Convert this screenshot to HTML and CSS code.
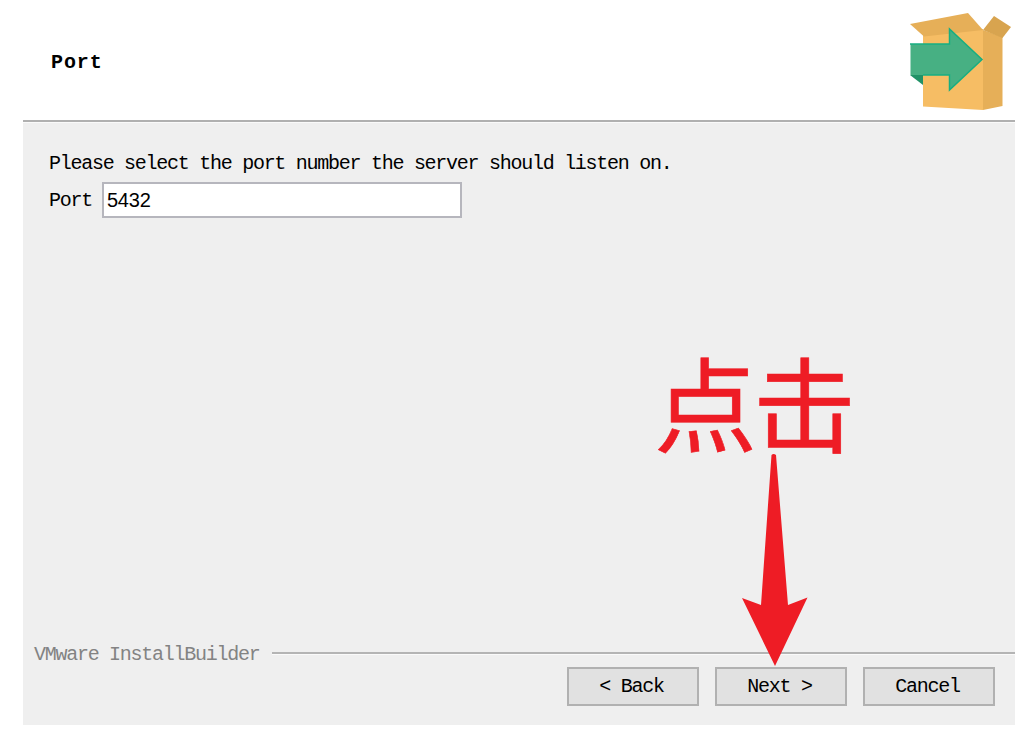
FILE: index.html
```html
<!DOCTYPE html>
<html lang="en">
<head>
  <meta charset="UTF-8">
  <meta name="viewport" content="width=device-width, initial-scale=1.0">
  <title>Port</title>
  <link rel="stylesheet" href="styles.css">
</head>
<body>
  <div class="installer">
    <header class="header">
      <h1>Port</h1>
      <svg class="logo" viewBox="0 0 102 98" width="102" height="98">
        <path d="M13 22 73 16 73 97 13 93.500z" fill="#f6bd64"/>
        <path d="M73 17 92.500 24 92.500 93 73 97z" fill="#e6af58"/>
        <path d="M0 11 58 0 73 17 14 23.500z" fill="#e6af58"/>
        <path d="M73 17 84 3 101 14 92.500 25z" fill="#d8a44f"/>
        <path d="M0 62 13 62 13 72z" fill="#219267"/>
        <path d="M.500 31 39.500 31 39.500 16 72 46.500 39.500 77 39.500 62 .500 62z" fill="#47b083"/>
        <path d="M0 31H39.500V16L72 46.500 39.500 77V62H13" fill="none" stroke="#17ae82" stroke-width="1.500"/>
      </svg>
    </header>
    <form class="content">
      <p>Please select the port number the server should listen on.</p>
      <div class="field">
        <label for="port">Port</label>
        <input type="text" id="port" value="5432">
      </div>
    </form>
    <footer class="footer">
      <div class="brand">
        <span>VMware InstallBuilder</span>
        <div class="line"></div>
      </div>
      <div class="buttons">
        <button type="button">&lt; Back</button>
        <button type="button">Next &gt;</button>
        <button type="button">Cancel</button>
      </div>
    </footer>
    <!-- Click hint over the Next button -->
    <div class="hint">点击</div>
    <svg class="arrow" viewBox="0 0 66 212" width="66" height="212">
      <path d="M29.500 1Q31.500-1 34 1L46 151 65.500 143.500 33 212 0 144 19 151z" fill="#ee1c25"/>
    </svg>
  </div>
</body>
</html>
```

FILE: styles.css
```css
body {
  margin: 0;
  background: #fff;
  color: #000;
  font-family: "Liberation Mono", monospace;
  font-size: 20px;
  line-height: 24px;
  letter-spacing: -1.27px;
}

.installer {
  position: relative;
  display: flex;
  flex-direction: column;
  width: 992px;
  height: 725px;
  margin-left: 23px;
  background: #efefef;
}

.header {
  display: flex;
  justify-content: space-between;
  box-sizing: border-box;
  height: 122px;
  padding: 13px 3px 0 28px;
  background: #fff;
  border-bottom: 2px solid #b0b0b0;
}

h1 {
  margin: 38px 0 0;
  font-size: 20px;
  line-height: 24px;
  letter-spacing: 0.9px;
}

.content {
  flex: 1;
  padding: 29px 26px 0;
  border-top: 1px solid #fafafa;
}

p {
  margin: 0;
}

.field {
  display: flex;
  align-items: center;
  gap: 10px;
  margin-top: 6px;
}

.field label {
  padding-top: 2px;
}

input {
  box-sizing: border-box;
  width: 360px;
  height: 36px;
  padding: 0 3px;
  border: 2px solid #b6b6bd;
  background: #fff;
  font-family: "Liberation Sans", Arial, sans-serif;
  font-size: 20px;
  letter-spacing: -0.2px;
}

.footer {
  padding: 0 20px 19px 11px;
}

.brand {
  display: flex;
  align-items: center;
  gap: 13px;
  margin-right: -20px;
  color: #838383;
}

.line {
  flex: 1;
  height: 2px;
  margin-top: -3px;
  background: #b4b4b4;
  border-bottom: 1px solid #fafafa;
}

.buttons {
  display: flex;
  justify-content: flex-end;
  gap: 16px;
}

button {
  box-sizing: border-box;
  width: 132px;
  height: 39px;
  padding: 0 3px 0 0;
  border: 2px solid #b1b1b1;
  background: #e1e1e1;
  color: #000;
  font: inherit;
  letter-spacing: inherit;
}

.hint {
  position: absolute;
  left: 631px;
  top: 341px;
  color: #ee1c25;
  font-family: "Noto Sans CJK SC", sans-serif;
  font-size: 103px;
  line-height: 120px;
  letter-spacing: -4px;
  white-space: nowrap;
  -webkit-text-stroke: 0.6px #ee1c25;
}

.arrow {
  position: absolute;
  left: 719px;
  top: 454px;
}
```
